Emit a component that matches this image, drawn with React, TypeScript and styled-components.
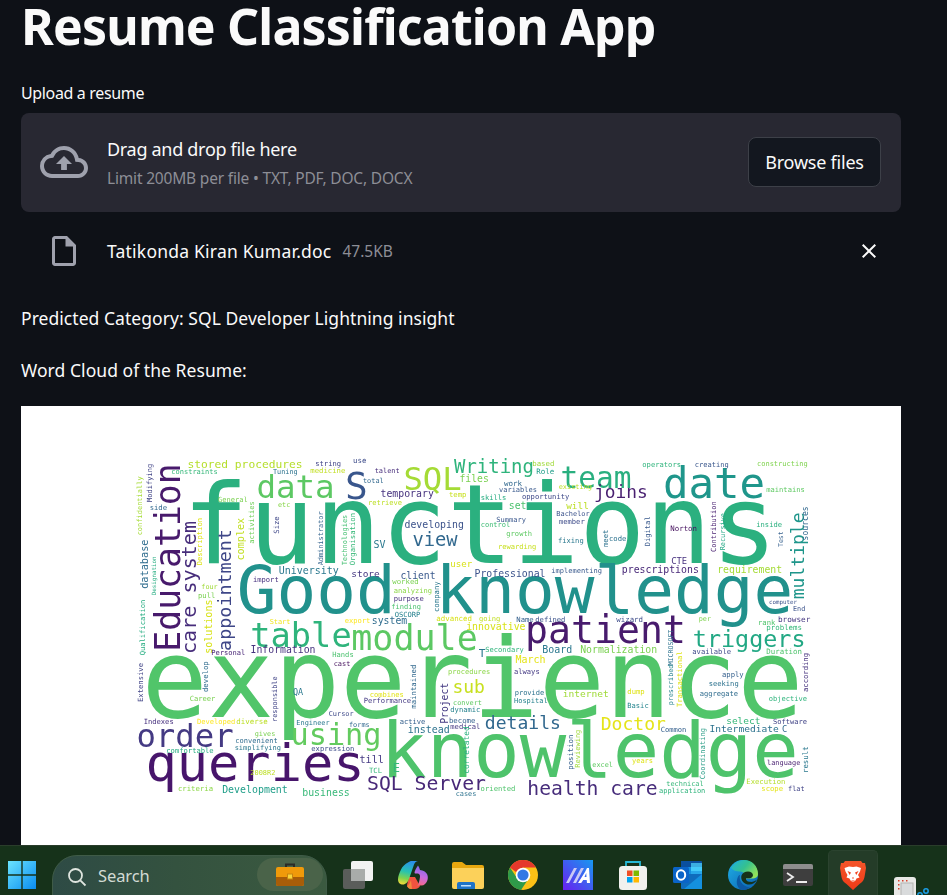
import React from "react";
import styled, { createGlobalStyle } from "styled-components";
import { MdOutlineCloudUpload, MdOutlineInsertDriveFile, MdClose } from "react-icons/md";

const Global = createGlobalStyle`
  html, body { margin: 0; padding: 0; height: 100%; background: #0e1117; overflow: hidden; }
  #root { height: 100%; }
  * { box-sizing: border-box; }
`;
const Page = styled.div`
  height: 895px; display: flex; flex-direction: column; background: #0e1117;
  font-family: "Noto Sans", sans-serif; color: #fafafa; overflow: hidden;
`;
const Main = styled.main`
  flex: 1; min-height: 0; padding: 0 46px 0 21px; overflow: hidden;
`;
const Title = styled.h1`
  margin: 0; font-size: 50px; line-height: 52px; font-weight: 700; letter-spacing: -0.83px; white-space: nowrap;
`;
const Label = styled.div`
  margin-top: 29px; font-size: 16px; line-height: 24px; letter-spacing: -0.35px;
`;
const Dropzone = styled.section`
  margin-top: 8px; height: 99px; background: #282832; border-radius: 8px;
  display: flex; align-items: center; padding: 0 20px 1px 19px; gap: 19px;
`;
const DropIcon = styled(MdOutlineCloudUpload)`
  font-size: 48px; color: #9fa1ad; flex: none;
`;
const DropText = styled.div`
  flex: 1; display: flex; flex-direction: column; gap: 5px;
`;
const DropTitle = styled.div`
  font-size: 18px; line-height: 26px; letter-spacing: -0.3px;
`;
const DropHint = styled.div`
  font-size: 15.5px; line-height: 22px; color: #8d8e96; letter-spacing: -0.18px;
`;
const BrowseButton = styled.button`
  width: 133px; height: 50px; background: #13171f; border: 1px solid #3d4048; border-radius: 8px;
  color: #fafafa; font: inherit; font-size: 18px; letter-spacing: -0.22px; padding: 0;
`;
const FileRow = styled.div`
  margin-top: 14px; height: 50px; display: flex; align-items: center; padding: 0 20px 0 25px;
`;
const FileIcon = styled(MdOutlineInsertDriveFile)`
  font-size: 36px; color: #9fa1ad; flex: none; margin-right: 25px;
`;
const FileName = styled.span`
  font-size: 17.5px; letter-spacing: 0.22px; white-space: nowrap;
`;
const FileSize = styled.span`
  margin-left: 11px; font-size: 15.5px; color: #8d8e96; flex: 1;
`;
const CloseIcon = styled(MdClose)`
  font-size: 24px; color: #fafafa; flex: none;
`;
const Paragraph = styled.p<{ $gap: number }>`
  margin: ${(p) => p.$gap}px 0 0; font-size: 17.5px; line-height: 28px; letter-spacing: 0.05px; white-space: nowrap;
`;
const CloudFrame = styled.figure`
  margin: 22px 0 0; width: 880px; height: 439px; background: #fff; overflow: hidden;
`;
const CloudSvg = styled.svg`
  display: block; width: 880px; height: 439px; filter: blur(0.45px);
  font-family: "DejaVu Sans Mono", monospace;
`;
const Taskbar = styled.footer`
  height: 50px; flex: none; background: #16321a; border-top: 1px solid #2a3d2b;
  display: flex; align-items: stretch; padding-left: 7px; overflow: hidden;
`;
const StartButton = styled.div`
  width: 30px; display: flex; align-items: center; flex: none; padding-top: 9px; margin-right: 15px;
`;
const SearchPill = styled.div`
  width: 275px; height: 50px; margin-top: 9px; margin-right: 1px; border-radius: 25px 25px 0 0 / 25px 25px 0 0;
  background: linear-gradient(90deg, #2e4b45 0%, #34523f 45%, #3b5a40 100%);
  border: 1px solid #3f5b47; display: flex; align-items: flex-start; padding: 2px 3px 0 14px; flex: none;
`;
const SearchIcon = styled.svg`
  width: 20px; height: 20px; margin-top: 9px; flex: none;
`;
const SearchLabel = styled.span`
  flex: 1; margin-left: 11px; margin-top: 5px; font-size: 16.5px; line-height: 26px; color: #d3dbd4; letter-spacing: -0.1px;
`;
const BriefChip = styled.div`
  width: 66px; height: 33px; border-radius: 17px; background: #4a6349; display: flex; align-items: center; justify-content: center;
`;
const Slot = styled.div<{ $active?: boolean }>`
  width: 50px; flex: none; margin-left: 5px; display: flex; align-items: center; justify-content: center; padding-top: 8px;
  ${(p) => p.$active ? `background:#243c28; border-radius:5px 5px 0 0; margin-top:4px; padding-top:4px; border:1px solid #2b432f; border-bottom:0;` : ""}
`;
const EdgeSlot = styled.div`
  width: 50px; flex: none; margin-left: 7px; position: relative;
`;
const PeekIcon = styled.svg`
  position: absolute; left: 8px; top: 30px;
`;

type W = [string, number, number, number, string, boolean?];
const groups: { ox: number; oy: number; s: number; w: W[] }[] = [
  { ox: 0, oy: 0, s: 1, w: [
    ["functions", 188, 563, 772, "#2bb07f"],
    ["experience", 147, 717, 798, "#51c56a"],
    ["Good knowledge", 240, 613, 790, "#21918c"],
    ["knowledge", 384, 777, 795, "#4ec36b"],
    ["queries", 148, 781, 362, "#47156b"],
    ["order", 138, 747, 232, "#443a83"],
    ["using", 292, 745, 380, "#63cb5f"],
    ["patient", 527, 643, 684, "#481b6d"],
    ["module", 353, 650, 476, "#5cc863"],
    ["table", 252, 647, 350, "#2fb47c"],
    ["data", 258, 498, 333, "#5cc863"],
    ["S", 347, 499, 366, "#39568c"],
    ["SQL", 405, 490, 460, "#a5db36"],
    ["Writing", 455, 473, 533, "#2fb47c"],
    ["team", 562, 488, 630, "#29af7f"],
    ["date", 665, 498, 763, "#1f968b"],
    ["joins", 595, 498, 647, "#481f70"],
    ["stored procedures", 188, 468, 302, "#b5de2b"],
    ["SQL Server", 368, 790, 485, "#482878"],
    ["Education", 180, 650, 465, "#481a6c", true],
    ["care system", 196, 653, 522, "#472d7b", true],
    ["appointment", 231, 650, 530, "#3f4788", true],
  ]},
  { ox: 120, oy: 450, s: 3, w: [
    ["string",587,47,662,"#414487"],["use",700,40,738,"#3e4c8a"],["talent",765,68,838,"#472d7b"],
    ["constraints",155,73,292,"#35b779"],["Tuning",460,72,532,"#2c728e"],["medicine",572,70,675,"#c2df23"],
    ["total",730,98,790,"#31688e"],["temporary",783,140,940,"#46327e"],["temp",988,140,1038,"#c8e020"],
    ["General",295,155,382,"#7ad151"],["retrieve",745,165,845,"#bddf26"],["etc",475,172,510,"#86d549"],
    ["side",90,180,140,"#31688e"],["developing",855,235,1030,"#3b528b"],["view",880,288,1010,"#31688e"],
    ["SV",762,295,795,"#2a788e"],["University",478,372,655,"#2a788e"],["store",695,380,778,"#453781"],
    ["client",843,387,945,"#38588c"],["user",992,350,1055,"#d8e219"],["import",400,397,475,"#46307e"],
    ["worked",818,403,895,"#7ad151"],["four",245,416,292,"#a0da39"],["pull",235,443,285,"#7ad151"],
    ["analyzing",822,428,935,"#8bd646"],["purpose",822,452,910,"#46307e"],["finding",815,477,902,"#4ac16d"],
    ["OSCORP",825,500,900,"#26828e"],["advanced",950,512,1055,"#d8e219"],["Start",450,522,510,"#f1e51d"],
    ["export",675,520,750,"#fde725"],["system",757,522,860,"#2f6c8e"],
    ["Modifying",95,155,42,"#414487",true],["confidentially",65,255,80,"#a5db36",true],
    ["database",85,415,270,"#2f6c8e",true],["Designation",108,435,320,"#26ad81",true],
    ["Description",245,345,205,"#dfe318",true],["complex",372,330,205,"#c2df23",true],
    ["activities",403,280,155,"#6ece58",true],["Size",478,250,200,"#3f4788",true],
    ["Administrator",610,345,185,"#33638d",true],["Technologies",680,345,195,"#43bf71",true],
    ["Organisation",705,345,190,"#37b878",true],["company",958,485,395,"#2a788e",true],
    ["solutions",275,610,450,"#d8e219",true],["Qualification",75,615,450,"#26ad81",true],
  ]},
  { ox: 470, oy: 450, s: 3, w: [
    ["based",188,47,252,"#a0da39"],["Role",200,72,252,"#1f9e89"],["operators",518,52,632,"#2fb47c"],
    ["creating",675,52,775,"#39568c"],["constructing",862,47,1012,"#7fd34e"],["files",-30,95,55,"#7ad151"],
    ["work",103,107,155,"#31688e"],["variables",88,125,200,"#38588c"],["existing",267,118,365,"#bddf26"],
    ["maintains",890,127,1003,"#5ec962"],["skills",33,150,108,"#27ad81"],["opportunity",157,148,297,"#3e4989"],
    ["set",118,178,168,"#4ac16d"],["will",290,178,355,"#bddf26"],["Bachelor",260,197,358,"#3b528b"],
    ["Summary",80,215,167,"#39568c"],["member",268,223,343,"#3e4c8a"],["control",33,232,120,"#3dbc74"],
    ["inside",860,230,935,"#2ab07f"],["growth",110,257,185,"#5ec962"],["Norton",602,242,680,"#440f5d"],
    ["code",418,272,468,"#2c728e"],["fixing",265,280,340,"#2a788e"],["rewarding",85,297,198,"#c8e020"],
    ["CTE",605,342,650,"#46307e"],["Professional",15,380,225,"#3b528b"],["implementing",245,370,395,"#38588c"],
    ["prescriptions",457,368,685,"#482878"],["requirement",743,368,935,"#a5db36"],["computer",898,462,980,"#3b528b"],
    ["End",970,482,1005,"#3b528b"],["going",28,512,90,"#c2df23"],["Name",140,515,190,"#35608d"],
    ["defined",197,515,285,"#3b528b"],["wizard",440,515,518,"#3e4c8a"],["per",687,512,722,"#7fd34e"],
    ["browser",925,515,1020,"#453781"],["rank",865,525,915,"#4ec36b"],["problems",890,540,995,"#35b779"],
    ["innovative",-10,540,165,"#d8e219"],
    ["multiple",1003,445,190,"#1f968b",true],["sources",1015,270,170,"#31688e",true],
    ["Contribution",738,305,155,"#481f70",true],["Recursive",765,300,190,"#22a884",true],
    ["Test",940,290,245,"#35608d",true],["meet",413,290,240,"#2c728e",true],["Digital",540,288,200,"#38588c",true],
  ]},
  { ox: 120, oy: 630, s: 3, w: [
    ["Personal",275,75,375,"#482576"],["Information",393,70,585,"#46327e"],["Hands",638,82,700,"#4ac16d"],
    ["cast",642,108,690,"#440f5d"],["procedures",985,133,1110,"#8bd646"],["sub",1000,190,1092,"#c8e020"],
    ["combines",750,200,850,"#e2e418"],["Career",210,213,285,"#7ad151"],["Performance",732,218,872,"#443983"],
    ["convert",1000,225,1085,"#5ec962"],["dynamic",992,245,1080,"#26828e"],["QA",520,195,548,"#2a788e"],
    ["Cursor",627,258,700,"#3e4989"],["Indexes",72,283,160,"#46307e"],["Developed",232,283,345,"#fde725"],
    ["diverse",350,283,442,"#bddf26"],["Engineer",530,285,628,"#2a788e"],["forms",688,290,748,"#31688e"],
    ["active",840,282,915,"#35608d"],["become",988,278,1065,"#35608d"],["gives",405,317,465,"#7ad151"],
    ["instead",865,310,988,"#2c728e"],["medical",992,297,1080,"#453781"],["convenient",347,338,472,"#2f6c8e"],
    ["simplifying",345,360,482,"#2a788e"],["expression",575,362,702,"#3e4c8a"],["comfortable",140,370,280,"#26ad81"],
    ["till",720,400,790,"#443983"],["2008R2",392,435,465,"#bddf26"],["TCL",748,428,785,"#35b779"],
    ["E",820,425,838,"#35b779"],["Development",308,490,502,"#1f9e89"],["business",548,497,688,"#37b878"],
    ["criteria",175,482,278,"#8bd646"],["cases",1008,498,1068,"#2c728e"],
    ["Extensive",70,215,100,"#414487",true],["develop",265,185,95,"#2f6c8e",true],
    ["responsible",472,275,140,"#414487",true],["maintained",888,235,105,"#31688e",true],
    ["Project",985,280,160,"#443983",true],["correlated",1047,430,290,"#2ab07f",true],
  ]},
  { ox: 470, oy: 630, s: 3, w: [
    ["Secondary",47,65,160,"#2fb47c"],["T",28,82,45,"#2a788e"],["Board",218,70,305,"#2a788e"],
    ["Normalization",332,68,560,"#7ad151"],["March",138,98,225,"#e5e419"],["available",668,72,782,"#3e4989"],
    ["Duration",890,72,995,"#4ec36b"],["triggers",672,50,1003,"#22a884"],["always",133,132,208,"#443983"],
    ["apply",757,142,820,"#35608d"],["seeking",717,168,805,"#2c728e"],["provide",135,195,222,"#2c728e"],
    ["internet",280,200,415,"#a0da39"],["dump",473,193,523,"#dfe318"],["aggregate",690,198,803,"#2f6c8e"],
    ["Hospital",133,218,232,"#26828e"],["objective",897,212,1010,"#2fb47c"],["Basic",473,235,535,"#25858e"],
    ["details",47,298,270,"#31688e"],["Doctor",395,300,585,"#e5e419"],["select",770,282,870,"#35b779"],
    ["Software",910,283,1010,"#414487"],["Common",573,305,648,"#35608d"],["Intermediate",720,305,925,"#2c728e"],
    ["C",937,305,950,"#31688e"],["language",892,405,990,"#481f70"],["excel",368,410,428,"#5ec962"],
    ["years",487,400,548,"#dfe318"],["Execution",830,462,945,"#b5de2b"],["technical",590,468,700,"#35b779"],
    ["health care",175,495,560,"#472d7b"],["scope",875,482,938,"#e5e419"],["flat",955,482,1003,"#414487"],
    ["oriented",33,482,135,"#4ec36b"],["application",568,490,705,"#2fb47c"],
    ["prescribed",610,225,105,"#26828e",true],["MICROSOFT",608,105,0,"#2c728e",true],
    ["Transactional",635,230,65,"#dfe318",true],["according",1015,185,70,"#46327e",true],
    ["position",308,418,315,"#35608d",true],["Reviewing",330,412,300,"#a0da39",true],
    ["Coordinating",705,447,295,"#2c9e88",true],["result",1015,428,350,"#2a788e",true],
  ]},
];

const ADV = 0.602;
const BEARING = 0.1;

function CloudWords() {
  return (
    <CloudSvg viewBox="21 406 880 439">
      {groups.flatMap((g, gi) =>
        g.w.map(([t, a, b, c, color, v], i) => {
          const ink = Math.abs(c - (v ? b : a)) / g.s;
          const fs = ink / (ADV * t.length - BEARING);
          const full = fs * ADV * t.length;
          const pad = (fs * BEARING) / 2;
          if (v) {
            const x = g.ox + a / g.s, y0 = g.oy + b / g.s + pad;
            return (
              <text key={gi + "-" + i} x={x} y={y0} fill={color} fontSize={fs}
                textLength={full} lengthAdjust="spacingAndGlyphs" transform={`rotate(-90 ${x} ${y0})`}>{t}</text>
            );
          }
          return (
            <text key={gi + "-" + i} x={g.ox + a / g.s - pad} y={g.oy + b / g.s} fill={color} fontSize={fs}
              textLength={full} lengthAdjust="spacingAndGlyphs">{t}</text>
          );
        })
      )}
    </CloudSvg>
  );
}

const WinLogo = () => (
  <svg width="30" height="30" viewBox="0 0 30 30">
    <defs><linearGradient id="wl" x1="0" y1="0" x2="1" y2="1"><stop offset="0" stopColor="#6be4ff"/><stop offset="1" stopColor="#0a8cf0"/></linearGradient></defs>
    <path fill="url(#wl)" d="M1 1h13.3v13.3H1zM15.700 1H29v13.3H15.700zM1 15.700h13.3V29H1zM15.700 15.700H29V29H15.700z"/>
  </svg>
);
const Briefcase = () => (
  <svg width="28" height="24" viewBox="0 0 28 24">
    <path d="M10 4V1.500h8V4" fill="none" stroke="#2b2b26" strokeWidth="2"/>
    <rect y="4" width="28" height="19" rx="2" fill="#f09a0a"/>
    <path d="M0 14h28v7a2 2 0 0 1-2 2H2a2 2 0 0 1-2-2z" fill="#a85d08"/>
    <rect x="11.500" y="11" width="5" height="5" fill="#f8d53a" stroke="#c78410"/>
  </svg>
);
const TaskView = () => (
  <svg width="30" height="28" viewBox="0 0 30 28">
    <rect x="0" y="8" width="22" height="20" rx="2" fill="#5a5d5a"/>
    <rect x="8" y="0" width="22" height="20" rx="2" fill="#f2f2f2"/>
    <rect x="8" y="8" width="14" height="12" fill="#a9acaa"/>
  </svg>
);
const Copilot = () => (
  <svg width="30" height="28" viewBox="0 0 30 28">
    <defs>
      <linearGradient id="c1" x1="0.5" y1="0" x2="0.3" y2="1"><stop offset="0" stopColor="#2b8fe8"/><stop offset=".45" stopColor="#27c3b0"/><stop offset=".75" stopColor="#7fd34e"/><stop offset="1" stopColor="#f1d83a"/></linearGradient>
      <linearGradient id="c2" x1="0.6" y1="0" x2="0.4" y2="1"><stop offset="0" stopColor="#7a6ae8"/><stop offset=".5" stopColor="#c46ae0"/><stop offset=".85" stopColor="#ee6a9a"/><stop offset="1" stopColor="#f0574a"/></linearGradient>
    </defs>
    <path fill="#f0533f" d="M11 16h6l5 9c-1 2-3 3-5 3h-3c-3 0-5-2-5-4z"/>
    <path fill="#f08a3c" d="M9 25c2-1 3-3 4-6l1 9h-1c-2 0-3-1-4-3z"/>
    <path fill="url(#c1)" d="M10 1.500C11 .6 12.500 0 14 0h6c-2.500.5-3.500 2-4.500 5l-4.500 13c-1 3-3.500 5.500-6 5.500C2 23.500 0 21.500 0 18.500c0-3 1.500-7 3-10 1.500-3 4-5.500 7-7z"/>
    <path fill="url(#c2)" d="M20 4.500C20.800 5.800 21.500 7 22 9c3.500.5 5.500 1.500 7 4 1 2 1 4 .5 6-1 3.500-3.500 5.500-6 5.500-2 0-4 .5-5.500 1.500 2-2 3-4 3.500-7l.5-3c.3-2-.5-3-2-3.500h-2.500c-1.500 0-1.500-2 2.500-8z"/>
  </svg>
);
const Folder = () => (
  <svg width="32" height="28" viewBox="0 0 32 28">
    <path d="M0 3a2 2 0 0 1 2-2h8l4 3h16a2 2 0 0 1 2 2v4H0z" fill="#e8a80f"/>
    <path d="M0 7h32v19a2 2 0 0 1-2 2H2a2 2 0 0 1-2-2z" fill="#fcd15a"/>
    <path d="M5 28v-5a2 2 0 0 1 2-2h14a2 2 0 0 1 2 2v5z" fill="#1e73c8"/>
    <rect x="9" y="24" width="10" height="1.500" fill="#bfe0ff"/>
  </svg>
);
const Chrome = () => (
  <svg width="30" height="30" viewBox="0 0 30 30">
    <circle cx="15" cy="15" r="15" fill="#fbc116"/>
    <path fill="#2f9a49" d="M2 7.500A15 15 0 0 0 13 29.900L21 18H9z"/>
    <path fill="#e5382c" d="M2 7.500A15 15 0 0 1 28 7.500H15L8 12z"/>
    <circle cx="15" cy="15" r="7.300" fill="#fff"/>
    <circle cx="15" cy="15" r="5.600" fill="#3478e5"/>
  </svg>
);
const MApp = () => (
  <svg width="30" height="30" viewBox="0 0 30 30">
    <defs><linearGradient id="m" x1="0" y1="1" x2="1" y2="0"><stop offset="0" stopColor="#6a1ff0"/><stop offset="1" stopColor="#1799f0"/></linearGradient></defs>
    <rect width="30" height="30" fill="url(#m)"/>
    <path fill="#c9c9f5" d="M3 23l8-15h3L6 23zM10 23l8-15h3l-8 15z"/>
    <path fill="#fff" d="M15 23l7-11 2-4h2l1 15h-3l-.3-3h-3.500l-2 3zm6.500-6h2l-.3-4z"/>
  </svg>
);
const Store = () => (
  <svg width="30" height="30" viewBox="0 0 30 30">
    <path d="M8 7V2h14v5" fill="none" stroke="#26b8d6" strokeWidth="1.800"/>
    <rect x="1" y="6" width="28" height="24" rx="3.500" fill="#f1f1ee"/>
    <path fill="#ef4f25" d="M9 10.500h5.500V16H9z"/><path fill="#7fba00" d="M15.500 10.500H21V16h-5.500z"/>
    <path fill="#01a4ef" d="M9 17h5.500v5.500H9z"/><path fill="#ffb900" d="M15.500 17H21v5.500h-5.500z"/>
  </svg>
);
const Outlook = () => (
  <svg width="30" height="30" viewBox="0 0 30 30">
    <path fill="#0a4f9e" d="M8 1h20a1 1 0 0 1 1 1v5H8z"/>
    <path fill="#1490df" d="M8 7h10v7H8z"/><path fill="#28a8ea" d="M18 7h11v7H18z"/>
    <path fill="#50d9ff" d="M18 3h11v8H18z" opacity=".7"/>
    <path fill="#0f6cbd" d="M8 14h21v15H9a1 1 0 0 1-1-1z"/>
    <path fill="#1490df" d="M29 14v15H11z"/>
    <rect x="0" y="7" width="16" height="16" rx="1.500" fill="#0a64c8"/>
    <ellipse cx="8" cy="15" rx="4.200" ry="4.700" fill="none" stroke="#fff" strokeWidth="2"/>
  </svg>
);
const Edge = () => (
  <svg width="30" height="30" viewBox="0 0 30 30">
    <defs>
      <linearGradient id="e1" x1="0" y1="0" x2="1" y2="1"><stop offset="0" stopColor="#1fb0e6"/><stop offset="1" stopColor="#0a5fb0"/></linearGradient>
      <linearGradient id="e2" x1="0" y1="0" x2="1" y2=".6"><stop offset="0" stopColor="#1fb0dc"/><stop offset=".55" stopColor="#35c18f"/><stop offset="1" stopColor="#8fe05a"/></linearGradient>
    </defs>
    <circle cx="15" cy="15" r="15" fill="url(#e1)"/>
    <path fill="url(#e2)" d="M3 8C6 3 11 0 16 0c8 0 14 6 14 14 0 3.500-3 4.500-6 4.500H18c1-3-2-7-6-7-4 0-7-1-9-3.500z"/>
    <path fill="#16321a" d="M13.500 15.500c1-2.500 3.500-4 6.500-4 3 0 4.500 1.500 5 3.500 0 2-1.500 3.200-3.500 3.200h-3.500c-.5 1.800 1 3.300 3.500 3.600 3 .5 5.500-.5 7.500-2.300-2 4.500-7 6-11 4.500-3.500-1.500-5.500-5-4.500-8.500z"/>
    <path fill="#0c59a4" d="M12 15c-1.500 6 3 12 10 12.500-2 1.800-5 2.800-8 2.400-3.500-.8-6-5.400-5-10 .5-3 2-5 3-4.900z"/>
  </svg>
);
const Terminal = () => (
  <svg width="30" height="22" viewBox="0 0 30 22">
    <rect width="30" height="22" rx="2" fill="#3e3e3e"/>
    <path d="M0 2a2 2 0 0 1 2-2h26a2 2 0 0 1 2 2v3H0z" fill="#8d8d8d"/>
    <path d="M4 9l6 4-6 4" fill="none" stroke="#eee" strokeWidth="1.800"/>
    <path d="M13 18h11" stroke="#eee" strokeWidth="2"/>
  </svg>
);
const Brave = () => (
  <svg width="28" height="30" viewBox="0 0 26 30">
    <defs><linearGradient id="br" x1="0" y1="0" x2="0" y2="1"><stop offset="0" stopColor="#f4552a"/><stop offset="1" stopColor="#ef3a17"/></linearGradient></defs>
    <path fill="url(#br)" d="M5 1h16l1.500 2L25 3l1 5-1.500 9c-.5 3-2 5-5 7L13 30 6.500 24c-3-2-4.500-4-5-7L0 8l1-5 2.500 0z"/>
    <path fill="#fff" d="M13 7l3.500-.5 4.500 1.500-1 3.500-2 3.500 1.500 2.500-3 1-1 2-2.500 1.800-2.500-1.800-1-2-3-1L7.500 15l-2-3.500-1-3.500 4.500-1.500z"/>
    <path fill="#f1431f" d="M7.500 11l3.500 1.500-1.300 2.500zM18.500 11l-3.500 1.500 1.300 2.500zM12 17.500h2l-1 1.800zM11 20.500h4l-2 1.300z"/>
  </svg>
);
const Snip = () => (
  <>
    <rect x="1" y="1" width="22" height="24" rx="3" fill="#e8e8e6"/>
    <rect x="8" y="7" width="12" height="15" fill="#d9dbdc" stroke="#b4b4b2" strokeWidth="1"/>
    <path d="M5 4h1.500v1.500H5zM9 4h1.500v1.500H9zM13 4h1.500v1.500H13zM5 8h1.500v1.500H5zM5 12h1.500v1.500H5z" fill="#d8402b"/>
    <circle cx="33" cy="15" r="2.200" fill="none" stroke="#1b9fe8" strokeWidth="1.500"/>
    <circle cx="27" cy="19" r="2.200" fill="none" stroke="#1b9fe8" strokeWidth="1.500"/>
  </>
);

export default function App() {
  return (
    <Page>
      <Global />
      <Main>
        <Title>Resume Classification App</Title>
        <Label>Upload a resume</Label>
        <Dropzone>
          <DropIcon />
          <DropText>
            <DropTitle>Drag and drop file here</DropTitle>
            <DropHint>Limit 200MB per file • TXT, PDF, DOC, DOCX</DropHint>
          </DropText>
          <BrowseButton>Browse files</BrowseButton>
        </Dropzone>
        <FileRow>
          <FileIcon />
          <FileName>Tatikonda Kiran Kumar.doc</FileName>
          <FileSize>47.5KB</FileSize>
          <CloseIcon />
        </FileRow>
        <Paragraph $gap={28}>Predicted Category: SQL Developer Lightning insight</Paragraph>
        <Paragraph $gap={24}>Word Cloud of the Resume:</Paragraph>
        <CloudFrame><CloudWords /></CloudFrame>
      </Main>
      <Taskbar>
        <StartButton><WinLogo /></StartButton>
        <SearchPill>
          <SearchIcon viewBox="0 0 20 20" fill="none" stroke="#dfe5df" strokeWidth="1.800">
            <circle cx="8.500" cy="8.500" r="6.500" /><path d="M13.300 13.300L18.500 18.500" />
          </SearchIcon>
          <SearchLabel>Search</SearchLabel>
          <BriefChip><Briefcase /></BriefChip>
        </SearchPill>
        <Slot><TaskView /></Slot>
        <Slot><Copilot /></Slot>
        <Slot><Folder /></Slot>
        <Slot><Chrome /></Slot>
        <Slot><MApp /></Slot>
        <Slot><Store /></Slot>
        <Slot><Outlook /></Slot>
        <Slot><Edge /></Slot>
        <Slot><Terminal /></Slot>
        <Slot $active><Brave /></Slot>
        <EdgeSlot><PeekIcon width="36" height="26" viewBox="0 0 36 26"><Snip /></PeekIcon></EdgeSlot>
      </Taskbar>
    </Page>
  );
}
